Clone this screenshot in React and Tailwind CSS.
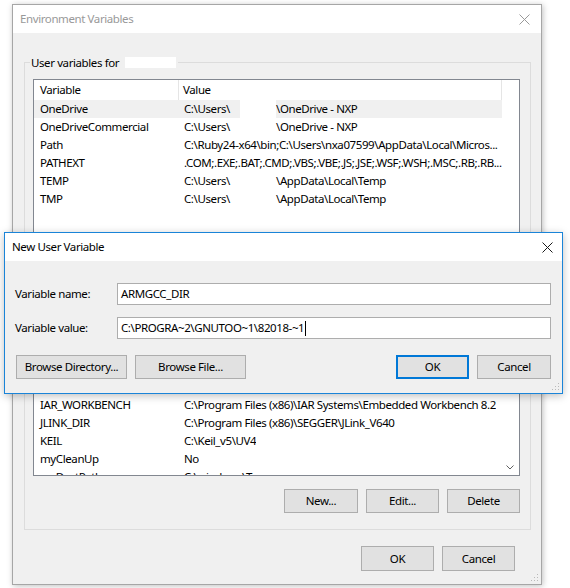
import React from "react";

const font = { fontFamily: '"Noto Sans", "Liberation Sans", sans-serif' };

const topRows = [
  { name: "OneDrive", pre: "C:\\Users\\", post: "\\OneDrive - NXP", hl: true },
  { name: "OneDriveCommercial", pre: "C:\\Users\\", post: "\\OneDrive - NXP" },
  { name: "Path", value: "C:\\Ruby24-x64\\bin;C:\\Users\\nxa07599\\AppData\\Local\\Micros..." },
  { name: "PATHEXT", value: ".COM;.EXE;.BAT;.CMD;.VBS;.VBE;.JS;.JSE;.WSF;.WSH;.MSC;.RB;.RB..." },
  { name: "TEMP", pre: "C:\\Users\\", post: "\\AppData\\Local\\Temp" },
  { name: "TMP", pre: "C:\\Users\\", post: "\\AppData\\Local\\Temp" },
];

const bottomRows = [
  { name: "IAR_WORKBENCH", value: "C:\\Program Files (x86)\\IAR Systems\\Embedded Workbench 8.2" },
  { name: "JLINK_DIR", value: "C:\\Program Files (x86)\\SEGGER\\JLink_V640" },
  { name: "KEIL", value: "C:\\Keil_v5\\UV4" },
  { name: "myCleanUp", value: "No" },
  { name: "myDestPath", value: "C:\\windows\\Temp" },
];

const Row = ({ row }) => (
  <div
    className={`flex h-[18px] items-center text-black whitespace-nowrap shrink-0 ${
      row.hl ? "bg-[#f0f0f0]" : ""
    }`}
  >
    <div className="w-[145px] shrink-0 overflow-hidden pl-[6px]">{row.name}</div>
    {row.value ? (
      <div className="pl-[5px] overflow-hidden">{row.value}</div>
    ) : (
      <div className="flex h-full items-center pl-[5px]">
        <span className="w-[56px] shrink-0">{row.pre}</span>
        <span className="w-[36px] shrink-0 h-full bg-white" />
        <span>{row.post}</span>
      </div>
    )}
  </div>
);

const WinButton = ({ children, w, primary }) => (
  <button
    className={`h-[24px] ${w} bg-[#e1e1e1] text-black border ${
      primary
        ? "border-[#0078d7] shadow-[inset_0_0_0_1px_#0078d7]"
        : "border-[#adadad]"
    }`}
  >
    {children}
  </button>
);

const CloseX = ({ color }) => (
  <svg width="11" height="11" viewBox="0 0 11 11">
    <path d="M0.5 0.5L10.5 10.5M10.5 0.5L0.5 10.5" stroke={color} strokeWidth="1" />
  </svg>
);

const Grip = () => (
  <svg width="8" height="8" viewBox="0 0 8 8" className="absolute right-[2px] bottom-[2px]">
    <g fill="#b9b9b9">
      <rect x="6" y="0" width="1" height="1" />
      <rect x="3" y="3" width="1" height="1" />
      <rect x="6" y="3" width="1" height="1" />
      <rect x="0" y="6" width="1" height="1" />
      <rect x="3" y="6" width="1" height="1" />
      <rect x="6" y="6" width="1" height="1" />
    </g>
  </svg>
);

export default function App() {
  return (
    <div
      className="relative w-[570px] h-[588px] bg-white overflow-hidden text-[11.5px] tracking-[-0.4px]"
      style={font}
    >
      {/* Environment Variables window */}
      <div className="relative ml-[12px] mt-[4px] w-[530px] h-[581px] flex flex-col bg-[#f0f0f0] border border-[#a6a6a6] shadow-[1px_1px_6px_rgba(0,0,0,0.25)]">
        <div className="h-[28px] bg-white flex items-center justify-between pl-[7px] pr-[11px] shrink-0">
          <span className="text-[#999999]">Environment Variables</span>
          <CloseX color="#999999" />
        </div>

        <div className="pl-[11px] pt-[29px]">
          <div className="relative w-[507px] h-[468px] border border-[#dcdcdc] flex flex-col pl-[8px] pr-[10px] pt-[16px]">
            <div className="absolute -top-[9px] left-[5px] flex items-center bg-[#f0f0f0] pl-[1px] pr-[2px] text-black">
              <span>User variables for</span>
              <span className="ml-[6px] w-[51px] h-[11px] bg-white" />
            </div>

            <div className="h-[397px] border border-[#828790] bg-white flex overflow-hidden">
              <div className="w-[468px] flex flex-col">
                <div className="flex h-[20px] items-center text-black shrink-0">
                  <div className="w-[145px] h-full flex items-center pl-[6px] border-r border-[#e5e5e5]">
                    Variable
                  </div>
                  <div className="flex-1 h-full flex items-center pl-[4px] border-r border-[#e5e5e5]">
                    Value
                  </div>
                </div>
                {topRows.map((r) => (
                  <Row key={r.name} row={r} />
                ))}
                <div className="h-[188px] shrink-0" />
                {bottomRows.map((r) => (
                  <Row key={r.name} row={r} />
                ))}
              </div>
              <div className="w-[16px] flex flex-col justify-end items-center pb-[5px]">
                <svg width="8" height="5" viewBox="0 0 8 5">
                  <path d="M0.5 0.5L4 4L7.5 0.5" stroke="#606060" fill="none" strokeWidth="1" />
                </svg>
              </div>
            </div>

            <div className="flex justify-end gap-[8px] mt-[13px]">
              <WinButton w="w-[74px]">New...</WinButton>
              <WinButton w="w-[73px]">Edit...</WinButton>
              <WinButton w="w-[73px]">Delete</WinButton>
            </div>
          </div>
        </div>

        <div className="flex justify-end gap-[8px] pr-[26px] pt-[16px]">
          <WinButton w="w-[73px] h-[25px]">OK</WinButton>
          <WinButton w="w-[73px] h-[25px]">Cancel</WinButton>
        </div>
        <Grip />
      </div>

      {/* New User Variable dialog */}
      <div className="absolute left-[4px] top-[232px] w-[559px] h-[162px] flex flex-col bg-[#f0f0f0] border border-[#1a84d8] shadow-[0_2px_8px_rgba(0,0,0,0.25)]">
        <div className="h-[28px] bg-white flex items-center justify-between pl-[7px] pr-[9px] shrink-0">
          <span className="text-black">New User Variable</span>
          <CloseX color="#1a1a1a" />
        </div>

        <div className="flex flex-col pl-[10px] pr-[11px] pt-[22px]">
          <div className="flex items-center h-[22px]">
            <span className="w-[102px] text-black">Variable name:</span>
            <div className="flex-1 h-full border border-[#adadad] bg-white flex items-center pl-[3px] text-black">
              ARMGCC_DIR
            </div>
          </div>
          <div className="flex items-center h-[22px] mt-[12px]">
            <span className="w-[102px] text-black">Variable value:</span>
            <div className="flex-1 h-full border border-[#adadad] bg-white flex items-center pl-[3px] text-black">
              <span>C:\PROGRA~2\GNUTOO~1\82018-~1</span>
              <span className="w-px h-[15px] bg-black ml-[1px]" />
            </div>
          </div>
          <div className="flex items-center mt-[16px] pl-[1px]">
            <WinButton w="w-[111px]">Browse Directory...</WinButton>
            <div className="ml-[8px]">
              <WinButton w="w-[111px]">Browse File...</WinButton>
            </div>
            <div className="ml-auto flex gap-[8px]">
              <WinButton w="w-[73px]" primary>
                OK
              </WinButton>
              <WinButton w="w-[74px]">Cancel</WinButton>
            </div>
          </div>
        </div>
        <Grip />
      </div>
    </div>
  );
}
